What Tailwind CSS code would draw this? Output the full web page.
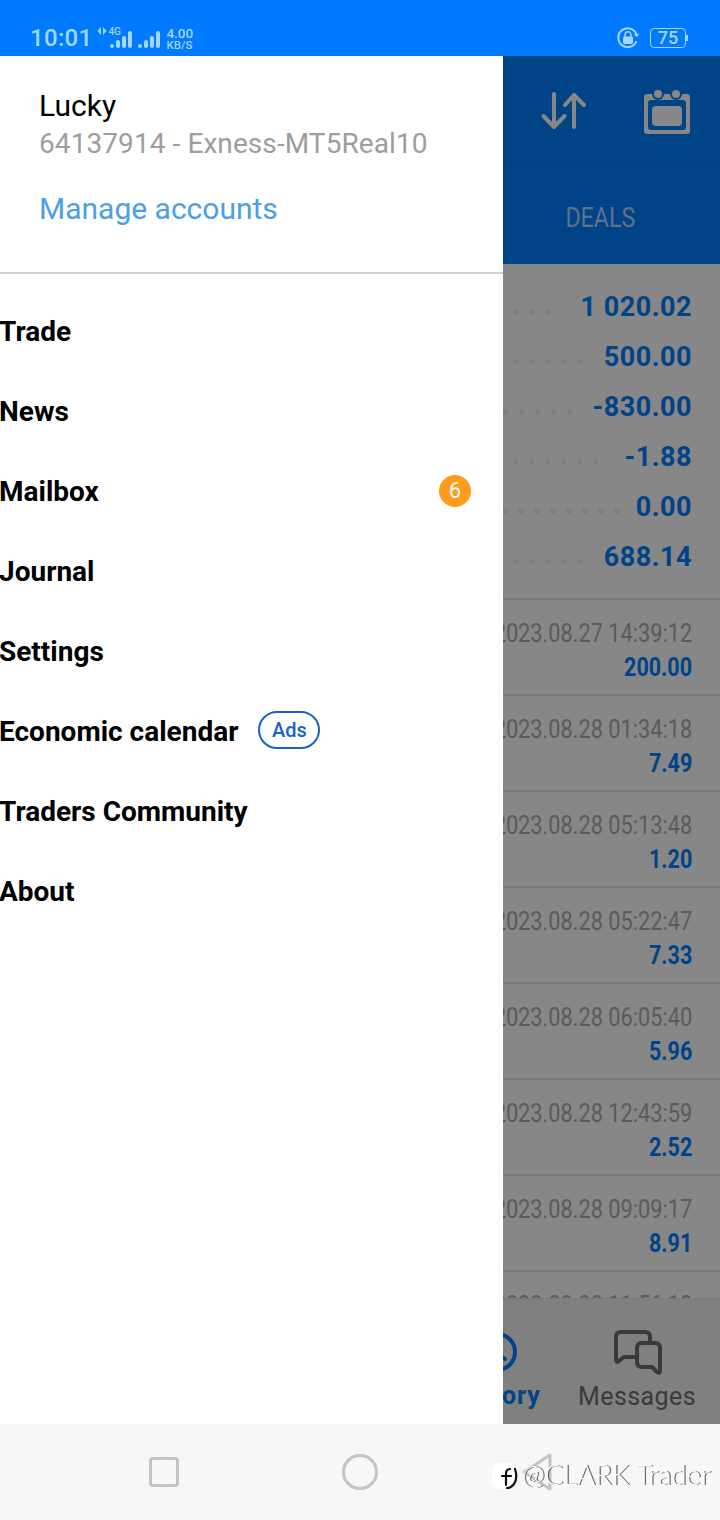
<!DOCTYPE html>
<html lang="en">
<head>
  <meta charset="UTF-8">
  <title>Trading drawer</title>
  <script src="https://cdn.jsdelivr.net/npm/@tailwindcss/browser@4"></script>
</head>
<body class="m-0 bg-white font-['Roboto',sans-serif]">
<div class="relative w-[720px] h-[1520px] overflow-hidden flex flex-col">

  <!-- status bar -->
  <div class="relative z-30 h-[56px] shrink-0 bg-[#007aff] text-[#a3d5ff] flex items-end pb-[4px] pl-[30px] pr-[32px]">
    <span class="text-[24px] font-medium leading-[28px] tracking-[0.3px]">10:01</span>
    <div class="relative w-[28px] h-[26px] ml-[5px]">
      <svg class="absolute left-0 top-[1px]" width="10" height="9" viewBox="0 0 10 9" fill="#a3d5ff"><path d="M4 0v8L0.500 4zM6 0l3.500 4L6 8z"/></svg>
      <span class="absolute left-[11px] top-0 text-[10px] leading-[12px] font-medium">4G</span>
    </div>
    <div class="flex items-end gap-[2px] h-[18px] mb-[4px] -ml-[15px]">
      <i class="block w-[4px] h-[4px] rounded-full bg-[#a3d5ff]"></i>
      <i class="block w-[4px] h-[8px] rounded-full bg-[#a3d5ff]"></i>
      <i class="block w-[4px] h-[12px] rounded-full bg-[#a3d5ff]"></i>
      <i class="block w-[4px] h-[17px] rounded-full bg-[#a3d5ff]"></i>
    </div>
    <div class="flex items-end gap-[2px] h-[18px] mb-[4px] ml-[6px]">
      <i class="block w-[4px] h-[4px] rounded-full bg-[#a3d5ff]"></i>
      <i class="block w-[4px] h-[8px] rounded-full bg-[#a3d5ff]"></i>
      <i class="block w-[4px] h-[12px] rounded-full bg-[#a3d5ff]"></i>
      <i class="block w-[4px] h-[17px] rounded-full bg-[#a3d5ff]"></i>
    </div>
    <div class="ml-[6px] mb-[1px] text-[13.5px] leading-[12px] font-medium">
      <div>4.00</div>
      <div class="text-[11.5px]">KB/S</div>
    </div>
    <svg class="ml-auto mb-[3px]" width="22" height="22" viewBox="0 0 22 22" fill="none">
      <path d="M19.500 14a9.400 9.400 0 1 1 .2-6" stroke="#a3d5ff" stroke-width="2"/>
      <path d="M21.500 6.500l-1.600 2.600-2.600-1.600" stroke="#a3d5ff" stroke-width="1.400"/>
      <rect x="6" y="9.500" width="10" height="7.500" rx="1.400" fill="#a3d5ff"/>
      <path d="M8 10V7.800a3 3 0 0 1 6 0V10" stroke="#a3d5ff" stroke-width="1.500"/>
    </svg>
    <div class="ml-[11px] mb-[4px] w-[36px] h-[20px] rounded-[4px] border border-[#a3d5ff] text-[18px] leading-[18px] font-medium text-center">75</div>
    <i class="block w-[2px] h-[6px] bg-[#a3d5ff] mb-[11px]"></i>
  </div>

  <!-- app behind the drawer -->
  <div class="h-[111px] shrink-0 bg-[#0080ff] border-b border-[#0073e6] flex items-center justify-end">
    <svg class="mr-[54px]" width="50" height="42" viewBox="0 0 50 42" fill="none" stroke="#fff" stroke-width="4" stroke-linecap="round" stroke-linejoin="round">
      <path d="M14 4v33M3.500 26 14 37l10.500-11"/>
      <path d="M34 37V5M25 15 34 5l10 10"/>
    </svg>
    <svg class="mr-[30px]" width="46" height="46" viewBox="0 0 46 46">
      <rect x="0" y="6" width="46" height="40" rx="3" fill="#fff"/>
      <rect x="4" y="12" width="38" height="30" rx="3" fill="#0080ff"/>
      <circle cx="14" cy="6" r="6" fill="#0080ff"/>
      <circle cx="32" cy="6" r="6" fill="#0080ff"/>
      <circle cx="14" cy="6" r="4" fill="#fff"/>
      <circle cx="32" cy="6" r="4" fill="#fff"/>
      <rect x="8" y="18" width="30" height="20" rx="4" fill="#fff"/>
    </svg>
  </div>
  <div class="h-[97px] shrink-0 bg-[#0080ff] flex items-center justify-end pt-[4px]">
    <span class="mr-[85px] text-[27px] leading-[32px] text-white/70 scale-x-[0.86] origin-right">DEALS</span>
  </div>

  <div class="h-[1034px] shrink-0 overflow-hidden bg-white">
    <div id="summary" class="h-[336px] pt-[18px] border-b-2 border-[#e5e5e5]"></div>
    <div id="deals"></div>
  </div>

  <div class="h-[126px] shrink-0 bg-[#f2f2f2] border-t border-[#e6e6e6] flex justify-end pr-[13px]">
    <div class="w-[140px] flex flex-col items-center pt-[32px]">
      <svg width="42" height="42" viewBox="0 0 42 42" fill="none" stroke="#0080ff" stroke-width="4" stroke-linecap="round">
        <circle cx="21" cy="21" r="18"/>
        <path d="M21 10v12l8 6"/>
      </svg>
      <span class="mt-[8px] text-[25px] leading-[30px] font-bold text-[#0080ff] tracking-[0.9px]">History</span>
    </div>
    <div class="w-[140px] flex flex-col items-center pt-[27px]">
      <svg width="55" height="52" viewBox="0 0 55 52" fill="none" stroke="#6e6e6e" stroke-width="4" stroke-linejoin="round">
        <path d="M25 31H14L9 35Q6 37 6 33V11Q6 6 11 6H35Q40 6 40 11V17"/>
        <path d="M32 17H45Q50 17 50 22V45Q50 48 47 46L42 41H32Q27 41 27 36V22Q27 17 32 17Z"/>
      </svg>
      <span class="mt-[4px] text-[25px] leading-[30px] text-[#6e6e6e] tracking-[0.4px]">Messages</span>
    </div>
  </div>

  <!-- android nav bar -->
  <div class="relative z-30 h-[96px] shrink-0 bg-[#f7f7f7]">
    <div class="flex items-center h-full">
      <div class="ml-[149px] w-[30px] h-[30px] rounded-[4px] border-[3px] border-[#c4c4c4]"></div>
      <div class="ml-[163px] w-[36px] h-[36px] rounded-full border-[3px] border-[#c4c4c4]"></div>
      <svg class="ml-[142px]" width="36" height="40" viewBox="0 0 36 40" fill="none" stroke="#c4c4c4" stroke-width="3" stroke-linejoin="round"><path d="M30 3 4 20l26 17z"/></svg>
    </div>
    <!-- watermark -->
    <div class="absolute left-[492px] top-[39px] w-[24px] h-[26px] rounded-[7px] bg-white"></div>
    <svg class="absolute left-[497px] top-[40px]" width="24" height="26" viewBox="0 0 24 26" fill="none" stroke="#111" stroke-width="2.200" stroke-linecap="round">
      <path d="M13 5Q9 5 9 10V21"/><path d="M5 12h9"/><path d="M18 5Q21 14 17 20Q14 24 10 24"/>
    </svg>
    <span class="absolute left-[522px] top-[34px] text-[27.5px] leading-[34px] font-['Lato',sans-serif] font-light text-white whitespace-nowrap [text-shadow:1px_0_0_#333]">@CLARK Trader</span>
  </div>

  <!-- scrim -->
  <div class="absolute left-0 top-[56px] w-full h-[1368px] bg-black/[.47] z-10"></div>

  <!-- drawer -->
  <aside class="absolute left-0 top-[56px] w-[503px] h-[1368px] bg-white z-20">
    <div class="h-[218px] pl-[39px] pt-[33px] border-b-2 border-[#d0d0d0]">
      <div class="text-[30px] leading-[34px] text-black">Lucky</div>
      <div class="mt-[4px] text-[28px] leading-[34px] text-[#9e9e9e] tracking-[0.08px]">64137914 - Exness-MT5Real10</div>
      <div class="mt-[31px] text-[30px] leading-[34px] text-[#4a9fe8]">Manage accounts</div>
    </div>
    <nav class="pt-[18px] -ml-px text-[28px] font-bold text-black">
      <div class="h-[80px] flex items-center">Trade</div>
      <div class="h-[80px] flex items-center">News</div>
      <div class="h-[80px] flex items-center justify-between pr-[32px]">
        <span>Mailbox</span>
        <span class="w-[32px] h-[32px] mb-[2px] rounded-full bg-[#ff9c1e] text-white text-[22px] font-normal leading-[32px] text-center">6</span>
      </div>
      <div class="h-[80px] flex items-center">Journal</div>
      <div class="h-[80px] flex items-center">Settings</div>
      <div class="h-[80px] flex items-center">
        <span>Economic calendar</span>
        <span class="ml-[20px] mb-[4px] w-[62px] h-[38px] rounded-full border-2 border-[#1a62c8] text-[#1a62c8] text-[20px] font-medium leading-[34px] text-center">Ads</span>
      </div>
      <div class="h-[80px] flex items-center">Traders Community</div>
      <div class="h-[80px] flex items-center">About</div>
    </nav>
  </aside>
</div>

<script>
  // left = x of first leader dot, dots = how many
  const summary = [
    { value: '1 020.02', left: 513, dots: 3 },
    { value: '500.00', left: 514, dots: 5 },
    { value: '-830.00', left: 503, dots: 5 },
    { value: '-1.88', left: 513, dots: 6 },
    { value: '0.00', left: 502, dots: 8 },
    { value: '688.14', left: 513, dots: 5 },
  ];
  const deals = [
    ['2023.08.27 14:39:12', '200.00'],
    ['2023.08.28 01:34:18', '7.49'],
    ['2023.08.28 05:13:48', '1.20'],
    ['2023.08.28 05:22:47', '7.33'],
    ['2023.08.28 06:05:40', '5.96'],
    ['2023.08.28 12:43:59', '2.52'],
    ['2023.08.28 09:09:17', '8.91'],
    ['2023.08.28 11:56:10', ''],
  ];
  document.getElementById('summary').innerHTML = summary.map(r => `
    <div class="relative h-[50px] flex items-center justify-end pr-[28px]">
      <div class="absolute top-[27px] flex gap-[11px]" style="left:${r.left}px">
        ${'<i class="block w-[5px] h-[5px] rounded-full bg-[#ececec]"></i>'.repeat(r.dots)}
      </div>
      <span class="text-[27px] leading-[32px] font-bold text-[#0080ff] tracking-[0.5px]">${r.value}</span>
    </div>`).join('');
  document.getElementById('deals').innerHTML = deals.map(d => `
    <div class="h-[96px] border-b-2 border-[#e5e5e5] pr-[28px] pt-[18px] flex flex-col items-end">
      <span class="text-[25px] leading-[32px] text-[#acacac] whitespace-nowrap scale-x-[0.87] origin-right">${d[0]}</span>
      <span class="mt-[2px] text-[25px] leading-[32px] font-bold text-[#0080ff] scale-x-[0.86] origin-right">${d[1]}</span>
    </div>`).join('');
</script>
</body>
</html>
